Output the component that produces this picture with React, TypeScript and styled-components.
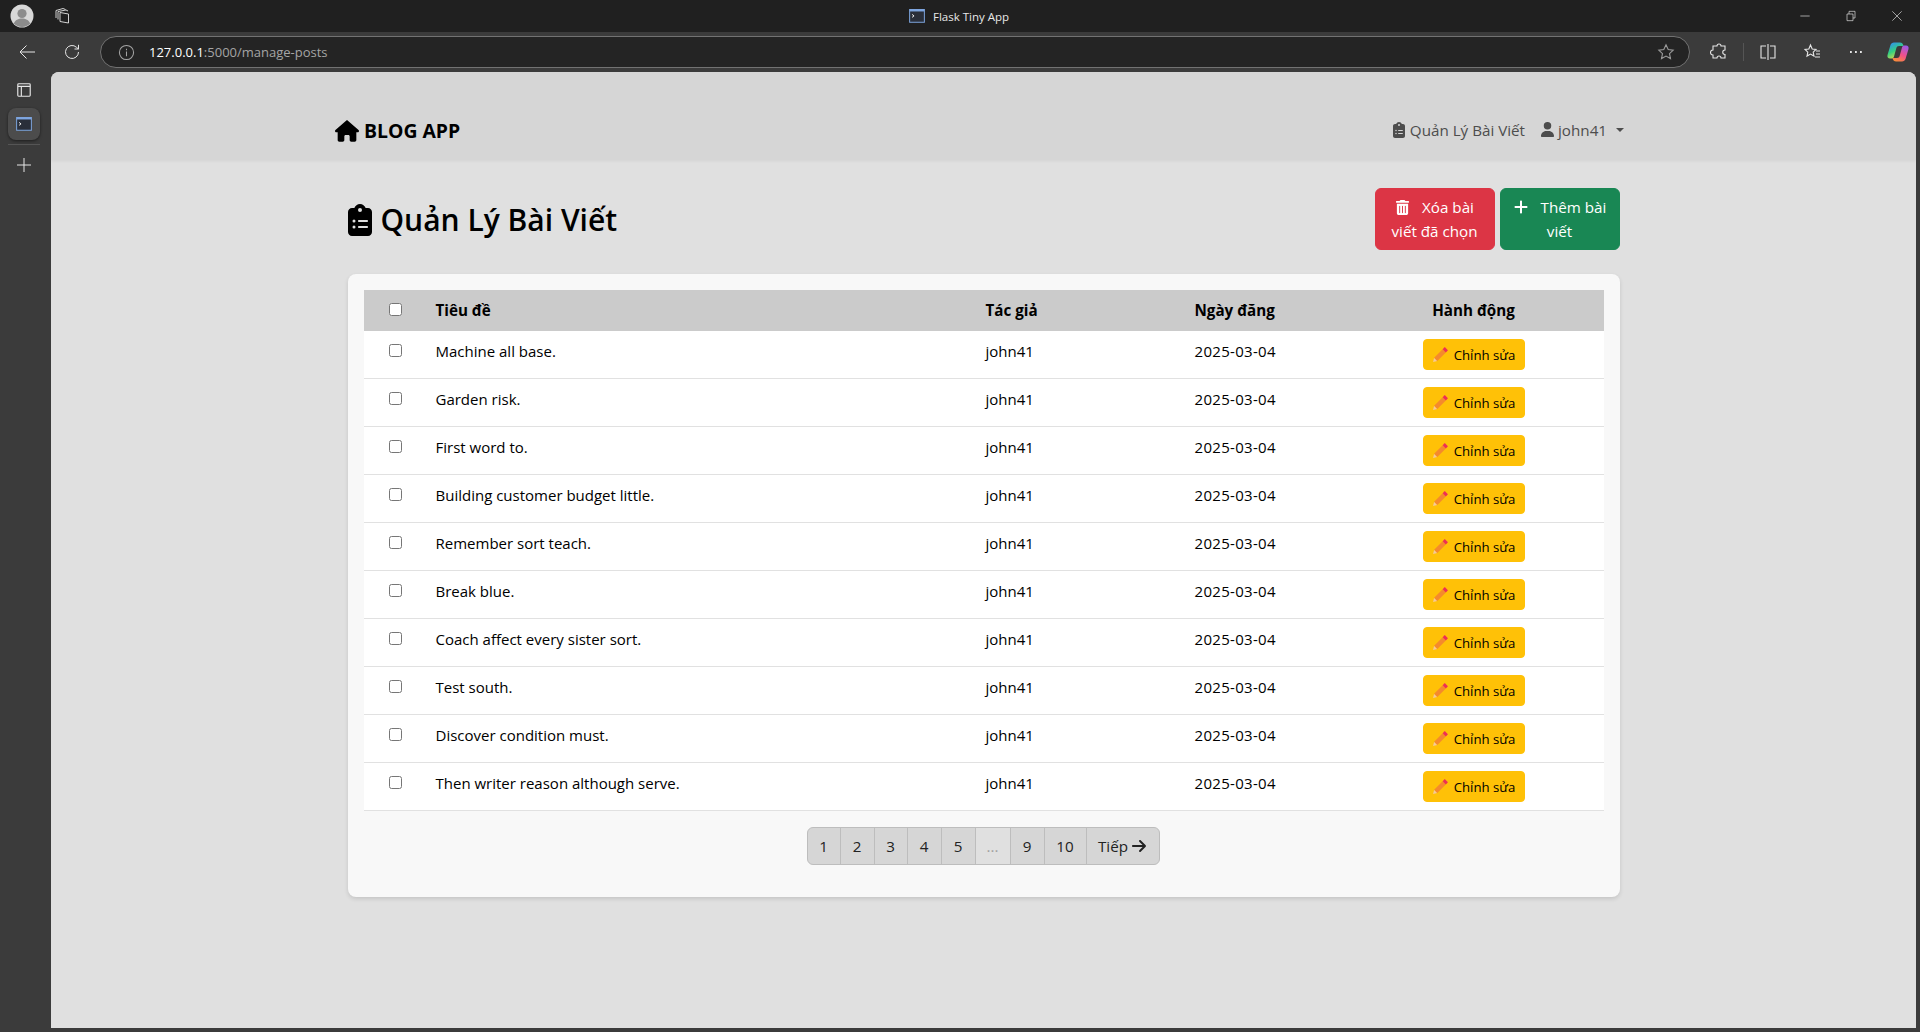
import React from "react";
import styled, { createGlobalStyle } from "styled-components";
import { FaHouse, FaClipboardList, FaUser, FaTrashCan, FaPlus, FaArrowRight } from "react-icons/fa6";

const GlobalStyle = createGlobalStyle`
  html, body { margin: 0; padding: 0; height: 100%; overflow: hidden; }
  body { font-family: "Open Sans", "Liberation Sans", sans-serif; background: #3b3b3b; color: #000; }
  * { box-sizing: border-box; }
`;

const Shell = styled.div`
  width: 1920px;
  height: 1032px;
  display: flex;
  flex-direction: column;
  background: #3b3b3b;
`;

const TitleBar = styled.div`
  height: 32px;
  background: #202020;
  display: flex;
  align-items: center;
  position: relative;
  padding-left: 10px;
  color: #e4e4e4;
`;

const WindowTitle = styled.div`
  position: absolute;
  left: 909px;
  top: 0;
  height: 32px;
  display: flex;
  align-items: center;
  gap: 8px;
  font-size: 11.5px;
  color: #e8e8e8;
`;

const WindowButtons = styled.div`
  margin-left: auto;
  display: flex;
  align-items: center;
  gap: 34px;
  padding-right: 17px;
`;

const TabsSlot = styled.span`
  display: flex;
  margin-left: 19px;
`;

const ToolBar = styled.div`
  height: 40px;
  display: flex;
  align-items: center;
  padding-left: 18px;
  color: #e6e6e6;
`;

const ReloadSlot = styled.span`
  display: flex;
  margin-left: 27px;
`;

const AddressBar = styled.div`
  width: 1590px;
  height: 32px;
  margin-left: 19px;
  border: 1px solid #727272;
  border-radius: 16px;
  background: #242424;
  display: flex;
  align-items: center;
  padding: 0 14px 0 17px;
  font-size: 13px;
  color: #a5a5a5;
`;

const Host = styled.span`
  color: #fff;
  margin-left: 14px;
`;

const StarSlot = styled.span`
  margin-left: auto;
  display: flex;
  color: #9a9a9a;
`;

const ToolIcons = styled.div`
  display: flex;
  align-items: center;
  margin-left: 20px;
  gap: 26px;
`;

const Divider = styled.span`
  width: 1px;
  height: 18px;
  background: #555;
  margin: 0 -11px;
`;

const CopilotSlot = styled.span`
  display: flex;
  margin-left: -4px;
`;

const Body = styled.div`
  flex: 1;
  display: flex;
  min-height: 0;
`;

const SideBar = styled.div`
  width: 51px;
  display: flex;
  flex-direction: column;
  align-items: center;
  padding: 10px 3px 0 0;
  color: #e6e6e6;
`;

const SideTab = styled.div`
  width: 32px;
  height: 32px;
  margin-top: 10px;
  border-radius: 8px;
  background: #4c4c4c;
  box-shadow: 0 1px 3px rgba(0, 0, 0, 0.5);
  display: flex;
  align-items: center;
  justify-content: center;
`;

const SideLine = styled.div`
  width: 32px;
  height: 1px;
  background: #555;
  margin: 4px 0 11px;
`;

const Page = styled.div`
  flex: 1;
  margin: 0 4px 4px 0;
  border-radius: 8px 8px 0 0;
  background: #e0e0e0;
  overflow: hidden;
`;

const NavBar = styled.nav`
  height: 88px;
  background: #d6d6d6;
  box-shadow: 0 1px 3px rgba(0, 0, 0, 0.06);
  display: flex;
  align-items: center;
  justify-content: space-between;
  padding: 29px 292px 0 284px;
`;

const Brand = styled.a`
  display: flex;
  align-items: center;
  gap: 5px;
  font-size: 19.4px;
  font-weight: 700;
  color: #000;
`;

const NavLinks = styled.div`
  display: flex;
  align-items: center;
  gap: 15px;
  margin-top: -2px;
  font-size: 15.2px;
  color: #4d4d4d;
`;

const NavLink = styled.a`
  display: flex;
  align-items: center;
  gap: 3px;
`;

const Caret = styled.span`
  width: 0;
  height: 0;
  margin-left: 6px;
  border-top: 4.8px solid #4d4d4d;
  border-left: 4.8px solid transparent;
  border-right: 4.8px solid transparent;
`;

const Container = styled.main`
  width: 1272px;
  margin: 28px auto 0;
`;

const HeaderRow = styled.div`
  display: flex;
  align-items: center;
  justify-content: space-between;
  height: 62px;
  margin-bottom: 24px;
`;

const Heading = styled.h1`
  display: flex;
  align-items: center;
  gap: 5px;
  margin: 1px 0 0 -4px;
  font-size: 30px;
  font-weight: 600;
`;

const Actions = styled.div`
  display: flex;
  gap: 5px;
`;

const ActionButton = styled.button<{ $bg: string }>`
  width: 120px;
  height: 62px;
  padding: 6px 12px;
  border: 1px solid ${(p) => p.$bg};
  border-radius: 6px;
  background: ${(p) => p.$bg};
  color: #fff;
  font: inherit;
  font-size: 15.2px;
  line-height: 24px;
  text-align: center;

  svg {
    vertical-align: -2px;
    margin-right: 12px;
  }
`;

const Card = styled.section`
  height: 623px;
  padding: 16px;
  background: #f8f8f8;
  border-radius: 8px;
  box-shadow: 0 2px 4px rgba(0, 0, 0, 0.12);
`;

const Table = styled.table`
  width: 1240px;
  border-collapse: separate;
  border-spacing: 0;
  table-layout: fixed;
  font-size: 15px;
  line-height: 24px;
`;

const HeadCell = styled.th<{ $center?: boolean }>`
  height: 41px;
  padding: 7px 8px 9px;
  background: #cbcbcb;
  font-size: 15.2px;
  font-weight: 700;
  text-align: ${(p) => (p.$center ? "center" : "left")};
  vertical-align: middle;
`;

const Row = styled.tr`
  height: 48px;
  background: #fff;
`;

const Cell = styled.td<{ $center?: boolean }>`
  padding: 8px;
  border-bottom: 1px solid #e1e1e1;
  vertical-align: top;
  text-align: ${(p) => (p.$center ? "center" : "left")};
`;

const DateCell = styled(Cell)`
  letter-spacing: 0.3px;
`;

const Check = styled.input.attrs({ type: "checkbox" })<{ $head?: boolean }>`
  display: block;
  width: 13px;
  height: 13px;
  margin: ${(p) => (p.$head ? "0" : "5px")} auto 0;
`;

const EditButton = styled.button`
  display: inline-flex;
  vertical-align: top;
  align-items: center;
  justify-content: center;
  gap: 5px;
  width: 102px;
  height: 31px;
  padding: 0;
  border: 1px solid #ffc107;
  border-radius: 4px;
  background: #ffc107;
  color: #000;
  font: inherit;
  font-size: 13.2px;
`;

const Pager = styled.div`
  display: flex;
  justify-content: center;
  margin-top: 16px;
`;

const PageItem = styled.a<{ $width: number; $disabled?: boolean }>`
  width: ${(p) => p.$width}px;
  height: 38px;
  display: flex;
  align-items: center;
  justify-content: center;
  gap: 3px;
  margin-left: -1px;
  border: 1px solid #bdbdbd;
  background: ${(p) => (p.$disabled ? "#e0e0e0" : "#d6d6d6")};
  color: ${(p) => (p.$disabled ? "#a0a0a0" : "#222")};
  font-size: 15.2px;

  &:first-child {
    border-radius: 6px 0 0 6px;
  }
  &:last-child {
    border-radius: 0 6px 6px 0;
  }
`;

const posts = [
  "Machine all base.",
  "Garden risk.",
  "First word to.",
  "Building customer budget little.",
  "Remember sort teach.",
  "Break blue.",
  "Coach affect every sister sort.",
  "Test south.",
  "Discover condition must.",
  "Then writer reason although serve.",
];

const pages = [
  { label: "1", width: 34 },
  { label: "2", width: 35 },
  { label: "3", width: 34 },
  { label: "4", width: 35 },
  { label: "5", width: 35 },
  { label: "...", width: 36, disabled: true },
  { label: "9", width: 35 },
  { label: "10", width: 43 },
];

const Line = ({ d, size = 18, w = 1.1 }: { d: string; size?: number; w?: number }) => (
  <svg width={size} height={size} viewBox="0 0 18 18" fill="none" stroke="currentColor" strokeWidth={w}>
    <path d={d} />
  </svg>
);

const Avatar = () => (
  <svg width="24" height="24" viewBox="0 0 24 24">
    <circle cx="12" cy="12" r="11.5" fill="#d8d8d8" />
    <circle cx="12" cy="9.5" r="4.6" fill="#8c8c8c" />
    <path d="M3.8 19.5c1.4-3.6 4.6-5 8.2-5s6.8 1.4 8.2 5a11.5 11.5 0 0 1-16.4 0z" fill="#8c8c8c" />
  </svg>
);

const TerminalIcon = ({ size }: { size: number }) => (
  <svg width={size} height={size * 0.86} viewBox="0 0 16 14">
    <rect x="0.5" y="0.5" width="15" height="13" fill="#2a2f3a" stroke="#7ea6e0" />
    <rect x="0.5" y="0.5" width="15" height="2" fill="#7ea6e0" />
    <path d="M3 5.5l2 1.5-2 1.5" fill="none" stroke="#fff" strokeWidth="0.9" />
  </svg>
);

const Copilot = () => (
  <svg width="22" height="22" viewBox="0 0 22 22">
    <defs>
      <linearGradient id="cpA" x1="0.2" y1="0" x2="0.7" y2="1">
        <stop offset="0" stopColor="#2f8ff0" />
        <stop offset="0.5" stopColor="#35d07f" />
        <stop offset="1" stopColor="#f5dc45" />
      </linearGradient>
      <linearGradient id="cpB" x1="0.8" y1="0" x2="0.3" y2="1">
        <stop offset="0" stopColor="#9a5bea" />
        <stop offset="0.55" stopColor="#f0508a" />
        <stop offset="1" stopColor="#f88a3c" />
      </linearGradient>
    </defs>
    <path
      d="M7 1.500h6c1.500 0 2.500.8 3 2l.5 1.500H12c-1.500 0-2.300.8-2.700 2.200L7 15.500c-.5 1.500-1.200 2-2.500 2H3C1 17.500 0 16 .5 14L3.500 4C4 2.500 5.300 1.500 7 1.500z"
      fill="url(#cpA)"
    />
    <path
      d="M15 20.500H9c-1.500 0-2.500-.8-3-2L5.500 17H10c1.500 0 2.300-.8 2.700-2.200L15 6.500c.5-1.500 1.200-2 2.500-2H19c2 0 3 1.500 2.500 3.500L18.500 18c-.5 1.500-1.800 2.500-3.500 2.500z"
      fill="url(#cpB)"
    />
  </svg>
);

const PencilEmoji = () => (
  <svg width="17" height="17" viewBox="0 0 16 16">
    <path d="M1 15l1-4 3 3z" fill="#f5c99a" />
    <path d="M2 11l8-8 3 3-8 8z" fill="#f58a2c" />
    <path d="M10 3l2-2 3 3-2 2z" fill="#ee2f55" />
  </svg>
);

export default function App() {
  return (
    <Shell>
      <GlobalStyle />
      <TitleBar>
        <Avatar />
        <TabsSlot>
          <Line size={18} w={0.9} d="M7 5.500l8.500 1.500v9l-8.500-1.500zM5 12.500V4.500l8-1.500 2 1M3 11V3.500L10 1.500l2.500 1" />
        </TabsSlot>
        <WindowTitle>
          <TerminalIcon size={16} />
          Flask Tiny App
        </WindowTitle>
        <WindowButtons>
          <Line size={12} w={1} d="M2 9h14" />
          <Line size={12} w={1} d="M3 6h9v10H3zM6 6V2h9v10h-3" />
          <Line size={12} w={1} d="M2 2l14 14M16 2L2 16" />
        </WindowButtons>
      </TitleBar>
      <ToolBar>
        <Line size={18} w={1} d="M17 9H2M8.500 2.500L2 9l6.500 6.500" />
        <ReloadSlot>
          <Line size={18} w={1} d="M15.500 9a6.500 6.500 0 1 1-2-4.700L15.500 6M15.500 1.800V6h-4" />
        </ReloadSlot>
        <AddressBar>
          <Line size={17} d="M9 1.500a7.500 7.500 0 1 1 0 15 7.500 7.500 0 0 1 0-15zM9 8v5M9 5v1.500" />
          <Host>127.0.0.1</Host>:5000/manage-posts
          <StarSlot>
            <Line size={18} d="M9 1.800l2.200 4.700 5 .6-3.700 3.500 1 5L9 13.100l-4.500 2.500 1-5L1.800 7.100l5-.6z" />
          </StarSlot>
        </AddressBar>
        <ToolIcons>
          <Line size={18} d="M7 3a2 2 0 0 1 4 0h4v4a2 2 0 0 0 0 4.500V15h-4a2 2 0 0 0-4 0H3v-3a2.500 2.500 0 0 1 0-5V3z" />
          <Divider />
          <Line size={18} d="M7 3H2v12h5M11 3h5v12h-5M9 1v16" />
          <Line size={18} d="M7.500 2l1.700 4 3.800.4-2.800 2.700.8 4-3.500-2-3.500 2 .8-4L2 6.400 5.800 6zM13 8h4M13 11h4M12 14h5" />
          <Line size={18} w={2} d="M3 9h1.800M8 9h1.800M13 9h1.800" />
          <CopilotSlot>
            <Copilot />
          </CopilotSlot>
        </ToolIcons>
      </ToolBar>
      <Body>
        <SideBar>
          <Line
            size={16}
            w={1.3}
            d="M3 2h12a1 1 0 0 1 1 1v12a1 1 0 0 1-1 1H3a1 1 0 0 1-1-1V3a1 1 0 0 1 1-1zM2 5h14M6 5v11"
          />
          <SideTab>
            <TerminalIcon size={16} />
          </SideTab>
          <SideLine />
          <Line size={18} w={1} d="M9 2v14M2 9h14" />
        </SideBar>
        <Page>
          <NavBar>
            <Brand>
              <FaHouse size={24} />
              BLOG APP
            </Brand>
            <NavLinks>
              <NavLink>
                <FaClipboardList size={16} />
                Quản Lý Bài Viết
              </NavLink>
              <NavLink>
                <FaUser size={15} />
                john41
                <Caret />
              </NavLink>
            </NavLinks>
          </NavBar>
          <Container>
            <HeaderRow>
              <Heading>
                <FaClipboardList size={32} />
                Quản Lý Bài Viết
              </Heading>
              <Actions>
                <ActionButton $bg="#dc3545">
                  <FaTrashCan size={15} />
                  Xóa bài viết đã chọn
                </ActionButton>
                <ActionButton $bg="#198754">
                  <FaPlus size={16} />
                  Thêm bài viết
                </ActionButton>
              </Actions>
            </HeaderRow>
            <Card>
              <Table>
                <colgroup>
                  <col style={{ width: 64 }} />
                  <col style={{ width: 550 }} />
                  <col style={{ width: 209 }} />
                  <col style={{ width: 157 }} />
                  <col style={{ width: 260 }} />
                </colgroup>
                <thead>
                  <tr>
                    <HeadCell>
                      <Check $head />
                    </HeadCell>
                    <HeadCell>Tiêu đề</HeadCell>
                    <HeadCell>Tác giả</HeadCell>
                    <HeadCell>Ngày đăng</HeadCell>
                    <HeadCell $center>Hành động</HeadCell>
                  </tr>
                </thead>
                <tbody>
                  {posts.map((title) => (
                    <Row key={title}>
                      <Cell>
                        <Check />
                      </Cell>
                      <Cell>{title}</Cell>
                      <Cell>john41</Cell>
                      <DateCell>2025-03-04</DateCell>
                      <Cell $center>
                        <EditButton>
                          <PencilEmoji />
                          Chỉnh sửa
                        </EditButton>
                      </Cell>
                    </Row>
                  ))}
                </tbody>
              </Table>
              <Pager>
                {pages.map((p) => (
                  <PageItem key={p.label} $width={p.width} $disabled={p.disabled}>
                    {p.label}
                  </PageItem>
                ))}
                <PageItem $width={74}>
                  Tiếp
                  <FaArrowRight size={16} />
                </PageItem>
              </Pager>
            </Card>
          </Container>
        </Page>
      </Body>
    </Shell>
  );
}
